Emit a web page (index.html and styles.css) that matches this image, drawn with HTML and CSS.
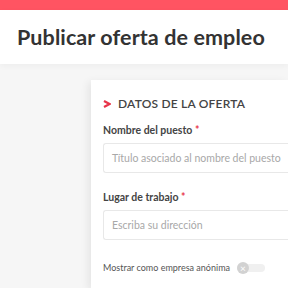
FILE: index.html
```html
<!DOCTYPE html>
<html lang="es">
<head>
<meta charset="utf-8">
<link rel="stylesheet" href="styles.css">
</head>
<body>
<div class="topbar"></div>
<header class="header">
  <h1 class="title">Publicar oferta de empleo</h1>
</header>
<main class="main">
  <section class="card">
    <h2 class="section-title"><svg class="chev" width="8" height="8" viewBox="0 0 8 8"><path d="M1 1 L6.5 4 L1 7" fill="none" stroke="#e8344a" stroke-width="2.2" stroke-linejoin="miter"/></svg>DATOS DE LA OFERTA</h2>
    <div class="field">
      <label class="label">Nombre del puesto <span class="req">*</span></label>
      <div class="input">Título asociado al nombre del puesto</div>
    </div>
    <div class="field">
      <label class="label">Lugar de trabajo <span class="req">*</span></label>
      <div class="input">Escriba su dirección</div>
    </div>
    <div class="toggle-row">
      <span class="toggle-label">Mostrar como empresa anónima</span>
      <span class="toggle"><span class="knob">×</span></span>
    </div>
  </section>
</main>
</body>
</html>
```
FILE: styles.css
```css
html, body { margin: 0; padding: 0; }
body {
  width: 288px;
  height: 288px;
  overflow: hidden;
  background: #f6f6f6;
  font-family: Lato, "Open Sans", sans-serif;
  color: #3a3a3a;
}
.topbar {
  height: 10px;
  background: #ff5462;
}
.header {
  background: #fff;
  height: 54px;
  padding-left: 17px;
  box-sizing: border-box;
  display: flex;
  align-items: center;
  box-shadow: 0 2px 6px rgba(0,0,0,0.04);
}
.title {
  margin: 0;
  font-size: 21.5px;
  font-weight: 700;
  color: #333;
  letter-spacing: 0.1px;
}
.main {
  padding: 16px 0 0 91px;
}
.card {
  background: #fff;
  box-shadow: -3px 2px 8px rgba(0,0,0,0.07);
  padding: 16px 0 0 12px;
  height: 208px;
  box-sizing: border-box;
}
.section-title {
  margin: 0 0 13px 0;
  font-size: 12px;
  font-weight: 600;
  color: #444;
  display: flex;
  align-items: center;
  letter-spacing: 0.2px;
}
.chev {
  margin-right: 7px;
  flex: none;
}
.field { margin-bottom: 18px; }
.label {
  display: block;
  font-size: 10.5px;
  font-weight: 700;
  color: #444;
  margin-bottom: 7px;
}
.req { color: #e8344a; }
.input {
  height: 30px;
  border: 1px solid #e8e8e8;
  border-right: none;
  border-radius: 3px 0 0 3px;
  box-sizing: border-box;
  display: flex;
  align-items: center;
  padding-left: 8px;
  font-size: 10.5px;
  color: #a8a8a8;
  white-space: nowrap;
  overflow: hidden;
}
.toggle-row {
  display: flex;
  align-items: center;
  margin-top: 22px;
  gap: 7px;
}
.toggle-label {
  font-size: 9px;
  color: #555;
}
.toggle {
  width: 28px;
  height: 8px;
  background: #f0f0f0;
  border-radius: 4px;
  position: relative;
  display: inline-block;
}
.knob {
  position: absolute;
  left: 0;
  top: -2px;
  width: 12px;
  height: 12px;
  border-radius: 50%;
  background: #d2d2d2;
  color: #fff;
  font-size: 10px;
  line-height: 12px;
  text-align: center;
}
```
